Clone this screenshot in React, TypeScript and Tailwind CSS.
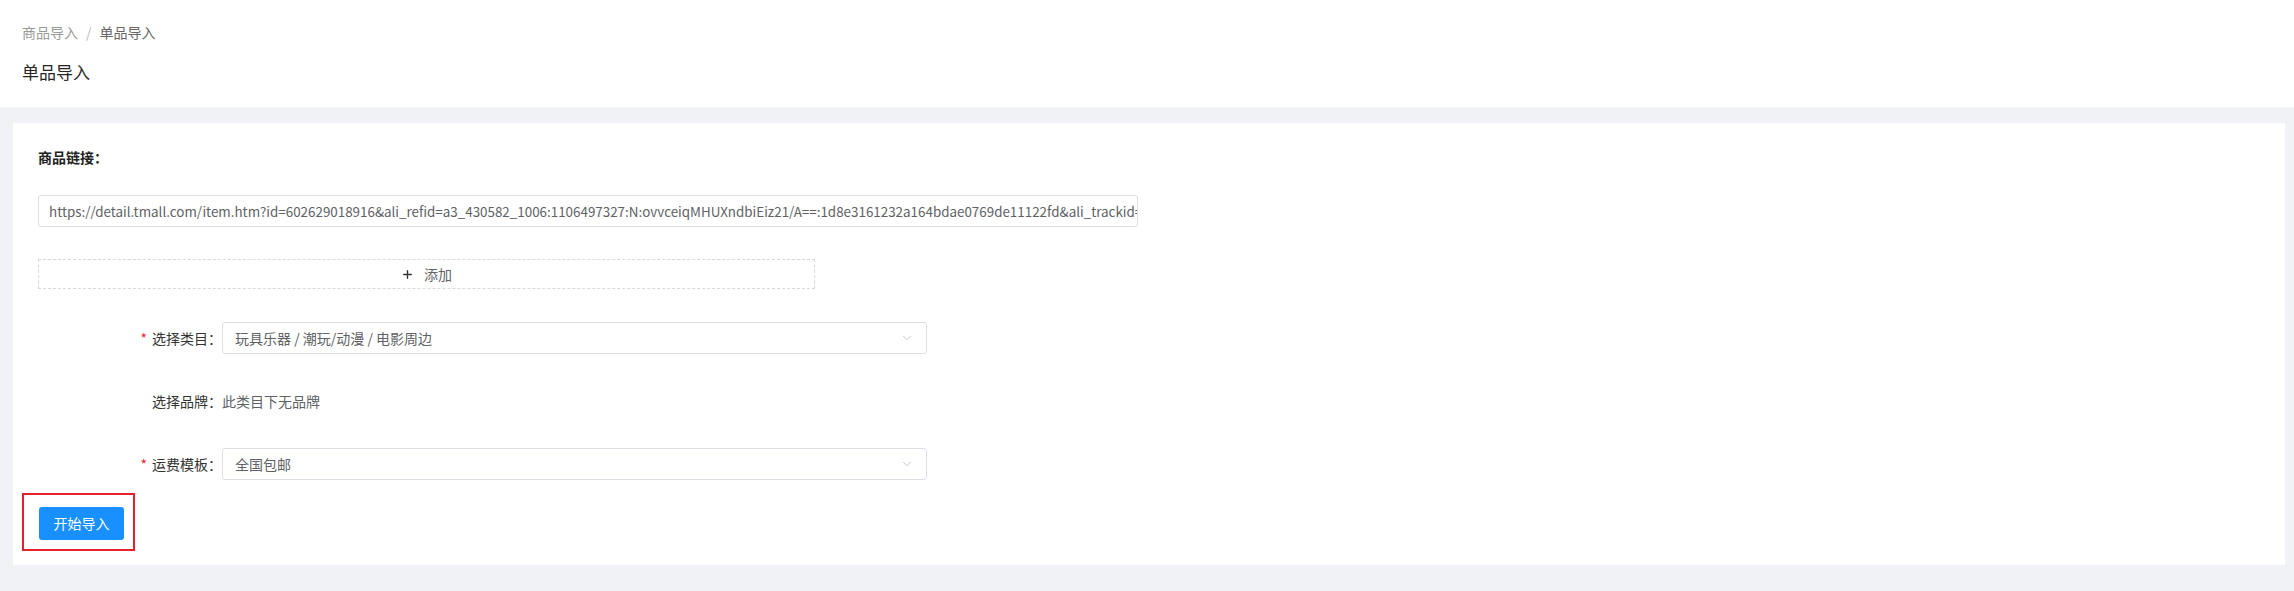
import { ChevronDown, Plus } from "lucide-react";

const url =
  "https://detail.tmall.com/item.htm?id=602629018916&ali_refid=a3_430582_1006:1106497327:N:ovvceiqMHUXndbiEiz21/A==:1d8e3161232a164bdae0769de11122fd&ali_trackid=1_1d8e3161232a164bdae0769de11122fd&spm=a230r.1.14.1";

function SelectBox({ value }: { value: string }) {
  return (
    <div className="flex h-[32px] w-[705px] items-center justify-between rounded-[3px] border border-[#dcdfe6] bg-white pl-[12px] pr-[12px]">
      <span className="text-[14px] text-[#606266]">{value}</span>
      <ChevronDown className="h-[14px] w-[14px] text-[#b4b8bf]" strokeWidth={1.3} />
    </div>
  );
}

function FormRow({
  label,
  required,
  children,
}: {
  label: string;
  required?: boolean;
  children: React.ReactNode;
}) {
  return (
    <div className="flex h-[32px] items-center">
      <div className="flex w-[184px] items-center justify-end text-[14px] text-[#333]">
        {required && <span className="mr-[5px] text-[#f5222d]">*</span>}
        <span>{label}：</span>
      </div>
      {children}
    </div>
  );
}

export default function App() {
  return (
    <div className="min-h-[591px] bg-[#f0f2f5] font-['Noto_Sans_CJK_SC',sans-serif]">
      {/* page header */}
      <div className="bg-white px-[22px] pt-[22px] pb-[23px]">
        <div className="flex h-[20px] items-center text-[14px] leading-[20px]">
          <span className="text-[#999]">商品导入</span>
          <span className="mx-[8px] text-[#bbb]">/</span>
          <span className="text-[#666]">单品导入</span>
        </div>
        <div className="mt-[18px] text-[17px] leading-[24px] text-[#262626]">单品导入</div>
      </div>

      {/* card */}
      <div className="mt-[16px] ml-[13px] mr-[9px] bg-white pt-[24px] pb-[14px] pl-[25px]">
        <div className="text-[14px] leading-[20px] font-bold text-[#222]">商品链接：</div>

        <div className="mt-[28px] flex h-[32px] w-[1100px] items-center overflow-hidden rounded-[3px] border border-[#dcdfe6] px-[10px]">
          <span className="whitespace-nowrap text-[13.4px] text-[#606266]">{url}</span>
        </div>

        <div className="mt-[32px] flex h-[30px] w-[777px] items-center justify-center gap-[10px] border border-dashed border-[#d9d9d9] text-[14px] text-[#606266]">
          <Plus className="h-[13px] w-[13px] text-[#333]" strokeWidth={2.5} />
          <span>添加</span>
        </div>

        <div className="mt-[33px] flex flex-col gap-[31px]">
          <FormRow label="选择类目" required>
            <SelectBox value="玩具乐器 / 潮玩/动漫 / 电影周边" />
          </FormRow>
          <FormRow label="选择品牌">
            <span className="text-[14px] text-[#606266]">此类目下无品牌</span>
          </FormRow>
          <FormRow label="运费模板" required>
            <SelectBox value="全国包邮" />
          </FormRow>
        </div>

        <div className="mt-[13px] -ml-[16px] inline-flex border-[2px] border-[#e5212b] pt-[12px] pr-[9px] pb-[9px] pl-[15px]">
          <button className="h-[33px] w-[85px] rounded-[3px] bg-[#1890ff] text-[14px] text-white">
            开始导入
          </button>
        </div>
      </div>
    </div>
  );
}
